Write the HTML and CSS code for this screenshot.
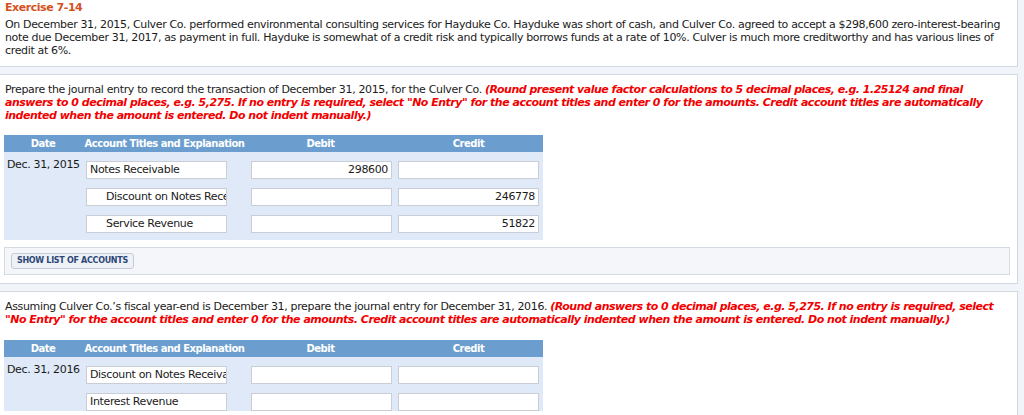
FILE: index.html
```html
<!DOCTYPE html>
<html>
<head>
<meta charset="utf-8">
<link rel="stylesheet" href="styles.css">
</head>
<body>
<div class="panel panel-intro">
  <div class="ex-title">Exercise 7-14</div>
  <p class="ex-text">On December 31, 2015, Culver Co. performed environmental consulting services for Hayduke Co. Hayduke was short of cash, and Culver Co. agreed to accept a $298,600 zero-interest-bearing note due December 31, 2017, as payment in full. Hayduke is somewhat of a credit risk and typically borrows funds at a rate of 10%. Culver is much more creditworthy and has various lines of credit at 6%.</p>
</div>

<div class="panel">
  <p class="ex-text">Prepare the journal entry to record the transaction of December 31, 2015, for the Culver Co. <span class="note">(Round present value factor calculations to 5 decimal places, e.g. 1.25124 and final answers to 0 decimal places, e.g. 5,275. If no entry is required, select "No Entry" for the account titles and enter 0 for the amounts. Credit account titles are automatically indented when the amount is entered. Do not indent manually.)</span></p>
  <table class="journal">
    <colgroup><col class="c-date"><col class="c-acct"><col class="c-amt"><col class="c-cr"></colgroup>
    <thead>
      <tr><th>Date</th><th>Account Titles and Explanation</th><th>Debit</th><th>Credit</th></tr>
    </thead>
    <tbody>
      <tr>
        <td class="date">Dec. 31, 2015</td>
        <td><div class="field">Notes Receivable</div></td>
        <td><div class="field num">298600</div></td>
        <td><div class="field num"></div></td>
      </tr>
      <tr>
        <td class="date"></td>
        <td><div class="field indent">Discount on Notes Rece</div></td>
        <td><div class="field num"></div></td>
        <td><div class="field num">246778</div></td>
      </tr>
      <tr class="last">
        <td class="date"></td>
        <td><div class="field indent">Service Revenue</div></td>
        <td><div class="field num"></div></td>
        <td><div class="field num">51822</div></td>
      </tr>
    </tbody>
  </table>
  <div class="accounts-bar"><span class="btn">SHOW LIST OF ACCOUNTS</span></div>
</div>

<div class="panel">
  <p class="ex-text">Assuming Culver Co.’s fiscal year-end is December 31, prepare the journal entry for December 31, 2016. <span class="note">(Round answers to 0 decimal places, e.g. 5,275. If no entry is required, select "No Entry" for the account titles and enter 0 for the amounts. Credit account titles are automatically indented when the amount is entered. Do not indent manually.)</span></p>
  <table class="journal journal-2">
    <colgroup><col class="c-date"><col class="c-acct"><col class="c-amt"><col class="c-cr"></colgroup>
    <thead>
      <tr><th>Date</th><th>Account Titles and Explanation</th><th>Debit</th><th>Credit</th></tr>
    </thead>
    <tbody>
      <tr>
        <td class="date">Dec. 31, 2016</td>
        <td><div class="field">Discount on Notes Receiva</div></td>
        <td><div class="field num"></div></td>
        <td><div class="field num"></div></td>
      </tr>
      <tr>
        <td class="date"></td>
        <td><div class="field">Interest Revenue</div></td>
        <td><div class="field num"></div></td>
        <td><div class="field num"></div></td>
      </tr>
    </tbody>
  </table>
</div>
</body>
</html>
```
FILE: styles.css
```css
html, body {
  margin: 0;
  padding: 0;
}
body {
  background: #f1f4f8;
  font-family: Verdana, "DejaVu Sans", sans-serif;
  font-size: 11px;
  line-height: 13px;
  letter-spacing: -0.35px;
  color: #1a1a1a;
  overflow: hidden;
}
.panel {
  background: #ffffff;
  border: 1px solid #d3d9e2;
  margin: 0 6px 7px -1px;
  padding: 8px 5px 8px 5px;
}
.panel-intro {
  margin-top: -1px;
  padding-top: 1px;
  padding-bottom: 9px;
}
.ex-title {
  color: #d4521f;
  font-weight: bold;
  font-size: 11px;
  line-height: 13px;
  letter-spacing: -0.45px;
  margin-bottom: 4px;
}
.ex-text {
  margin: 0;
}
.note {
  color: #f20000;
  font-weight: bold;
  font-style: italic;
  letter-spacing: -0.5px;
}
.journal {
  margin: 13px 0 0 -1px;
  border-collapse: collapse;
  table-layout: fixed;
  width: 539px;
  background: #dfe9f7;
}
.journal-2 {
  margin-top: 14px;
}
.c-date { width: 78px; }
.c-acct { width: 165px; }
.c-amt { width: 147px; }
.c-cr { width: 149px; }
.journal th {
  background: #6b9ecf;
  color: #ffffff;
  font-size: 10px;
  font-weight: bold;
  letter-spacing: -0.5px;
  height: 17px;
  padding: 0;
  line-height: 17px;
  text-align: center;
  white-space: nowrap;
}
.journal td {
  padding: 9px 0 0 4px;
  vertical-align: top;
  height: 18px;
}
.journal td.date {
  padding: 6px 0 0 3px;
  height: 21px;
  white-space: nowrap;
}
.journal tr.last td {
  padding-bottom: 7px;
}
.field {
  box-sizing: border-box;
  width: 141px;
  height: 18px;
  background: #ffffff;
  border: 1px solid #c9ced6;
  padding: 0 3px;
  line-height: 16px;
  white-space: nowrap;
  overflow: hidden;
}
.field.indent {
  padding-left: 19px;
}
.field.num {
  text-align: right;
}
.accounts-bar {
  margin: 7px 2px 0 -1px;
  background: #f4f6f9;
  border: 1px solid #d5dbe3;
  padding: 5px 0 0 6px;
  box-sizing: border-box;
  height: 28px;
}
.btn {
  display: inline-block;
  box-sizing: border-box;
  height: 16px;
  padding: 0 5px;
  border: 1px solid #c2cbd7;
  border-radius: 3px;
  background: #eef2f7;
  color: #2b4677;
  font-size: 8px;
  font-weight: bold;
  line-height: 14px;
  letter-spacing: -0.3px;
}
```
